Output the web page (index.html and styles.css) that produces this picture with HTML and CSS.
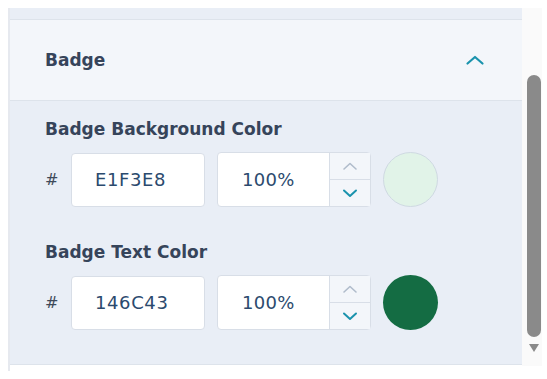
FILE: index.html
```html
<!DOCTYPE html>
<html>
<head>
<meta charset="utf-8">
<link rel="stylesheet" href="styles.css">
</head>
<body>
<div class="frame">
  <div class="panel">
    <div class="strip"></div>
    <div class="header">
      <span class="title">Badge</span>
      <svg class="chev" width="20" height="12" viewBox="0 0 20 12"><path d="M2.5 9.5 L10 3 L17.5 9.5" fill="none" stroke="#1a93ad" stroke-width="2.2" stroke-linecap="round" stroke-linejoin="round"/></svg>
    </div>
    <div class="content">
      <div class="field">
        <div class="label">Badge Background Color</div>
        <div class="row">
          <span class="hash">#</span>
          <div class="hex">E1F3E8</div>
          <div class="pct">
            <div class="pct-val">100%</div>
            <div class="spin">
              <div class="spin-btn"><svg width="16" height="10" viewBox="0 0 16 10"><path d="M2 8 L8 2.5 L14 8" fill="none" stroke="#b0bccb" stroke-width="1.6" stroke-linecap="round" stroke-linejoin="round"/></svg></div>
              <div class="spin-btn down"><svg width="16" height="10" viewBox="0 0 16 10"><path d="M2 2.5 L8 8 L14 2.5" fill="none" stroke="#1a93ad" stroke-width="2" stroke-linecap="round" stroke-linejoin="round"/></svg></div>
            </div>
          </div>
          <div class="swatch light"></div>
        </div>
      </div>
      <div class="field second">
        <div class="label">Badge Text Color</div>
        <div class="row">
          <span class="hash">#</span>
          <div class="hex">146C43</div>
          <div class="pct">
            <div class="pct-val">100%</div>
            <div class="spin">
              <div class="spin-btn"><svg width="16" height="10" viewBox="0 0 16 10"><path d="M2 8 L8 2.5 L14 8" fill="none" stroke="#b0bccb" stroke-width="1.6" stroke-linecap="round" stroke-linejoin="round"/></svg></div>
              <div class="spin-btn down"><svg width="16" height="10" viewBox="0 0 16 10"><path d="M2 2.5 L8 8 L14 2.5" fill="none" stroke="#1a93ad" stroke-width="2" stroke-linecap="round" stroke-linejoin="round"/></svg></div>
            </div>
          </div>
          <div class="swatch dark"></div>
        </div>
      </div>
    </div>
  </div>
  <div class="scroll">
    <div class="thumb"></div>
    <div class="arrow"></div>
  </div>
</div>
</body>
</html>
```
FILE: styles.css
```css
html, body {
  margin: 0;
  padding: 0;
  background: #ffffff;
  font-family: "DejaVu Sans", "Open Sans", sans-serif;
  overflow: hidden;
}
.frame {
  display: flex;
  padding: 8px 0 0 8px;
  height: 371px;
  box-sizing: border-box;
}
.panel {
  width: 512px;
  border-left: 2px solid #e6e9ef;
  display: flex;
  flex-direction: column;
}
.strip {
  height: 11px;
  background: #e9eef6;
  border-bottom: 1px solid #dde3eb;
}
.header {
  height: 80px;
  background: #f3f6fa;
  border-bottom: 1px solid #dde3eb;
  display: flex;
  align-items: center;
  justify-content: space-between;
  padding: 0 37px 0 35px;
}
.title {
  font-weight: 700;
  font-size: 17px;
  color: #36445a;
}
.content {
  height: 264px;
  background: #e9eef6;
  border-bottom: 1px solid #dde3eb;
  padding: 17px 0 0 35px;
  box-sizing: border-box;
}
.label {
  font-weight: 700;
  font-size: 17px;
  color: #36445a;
  line-height: 22px;
}
.row {
  display: flex;
  align-items: center;
  margin-top: 12px;
  height: 55px;
}
.second {
  margin-top: 34px;
}
.hash {
  width: 26px;
  font-size: 16px;
  color: #3e4a5a;
}
.hex {
  width: 134px;
  height: 54px;
  box-sizing: border-box;
  background: #fff;
  border: 1px solid #d8dee7;
  border-radius: 4px;
  font-size: 18px;
  letter-spacing: 0.6px;
  color: #2b4a6e;
  display: flex;
  align-items: center;
  padding-left: 23px;
}
.pct {
  margin-left: 12px;
  width: 154px;
  height: 55px;
  box-sizing: border-box;
  background: #fff;
  border: 1px solid #d8dee7;
  border-radius: 4px;
  display: flex;
}
.pct-val {
  width: 111px;
  display: flex;
  align-items: center;
  padding-left: 24px;
  box-sizing: border-box;
  font-size: 18px;
  letter-spacing: 0.3px;
  color: #2b4a6e;
}
.spin {
  flex: 1;
  border-left: 1px solid #d8dee7;
  display: flex;
  flex-direction: column;
  background: #f3f6fa;
}
.spin-btn {
  flex: 1;
  display: flex;
  align-items: center;
  justify-content: center;
}
.spin-btn.down {
  border-top: 1px solid #d8dee7;
}
.swatch {
  margin-left: 12px;
  width: 55px;
  height: 55px;
  border-radius: 50%;
  box-sizing: border-box;
}
.swatch.light {
  background: #e1f3e8;
  border: 1px solid #cfd9e2;
}
.swatch.dark {
  background: #146c43;
}
.scroll {
  width: 20px;
  height: 358px;
  background: #fafafa;
  position: relative;
}
.thumb {
  position: absolute;
  left: 5px;
  top: 67px;
  width: 14px;
  height: 262px;
  background: #8a8a8a;
  border-radius: 7px;
}
.arrow {
  position: absolute;
  left: 7px;
  top: 336px;
  width: 0;
  height: 0;
  border-left: 5px solid transparent;
  border-right: 5px solid transparent;
  border-top: 8px solid #8a8a8a;
}
```
